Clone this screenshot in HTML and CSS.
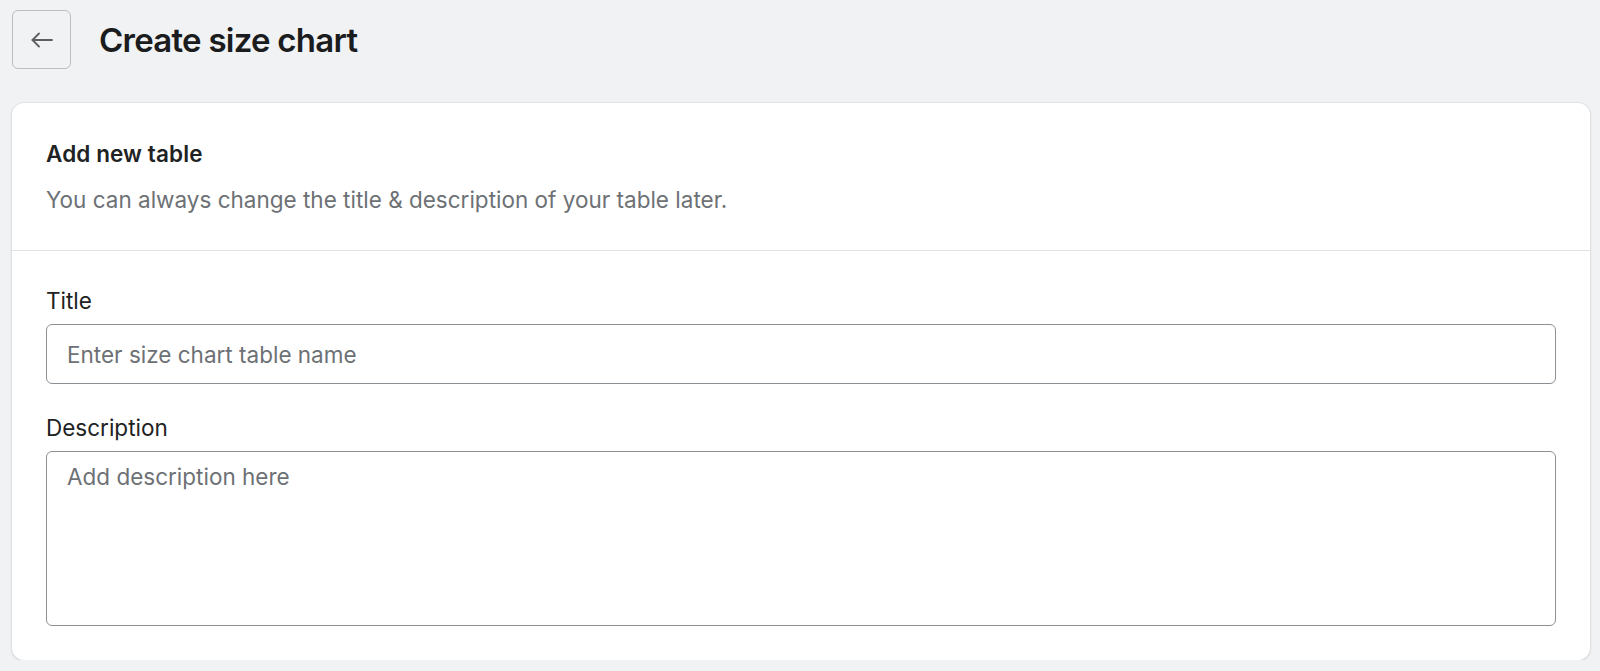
FILE: index.html
```html
<!DOCTYPE html>
<html lang="en">
<head>
<meta charset="utf-8">
<title>Create size chart</title>
<link rel="stylesheet" href="styles.css">
</head>
<body>
<div class="page">
  <header class="page-header">
    <button class="back-btn" type="button" aria-label="Back">
      <svg width="22" height="16" viewBox="0 0 22 16" fill="none" stroke="#5c5f62" stroke-width="1.8" stroke-linecap="round" stroke-linejoin="round">
        <path d="M21 8H1.5"/>
        <path d="M8 1.5L1.5 8L8 14.5"/>
      </svg>
    </button>
    <h1 class="page-title">Create size chart</h1>
  </header>

  <section class="card">
    <div class="card-section card-head">
      <h2 class="card-title">Add new table</h2>
      <p class="card-sub">You can always change the title &amp; description of your table later.</p>
    </div>
    <div class="card-section card-form">
      <label class="field">
        <span class="field-label">Title</span>
        <input class="text-input" type="text" placeholder="Enter size chart table name">
      </label>
      <label class="field">
        <span class="field-label">Description</span>
        <textarea class="text-area" placeholder="Add description here"></textarea>
      </label>
    </div>
  </section>
</div>
</body>
</html>
```

FILE: styles.css
```css
* { box-sizing: border-box; }

html, body {
  margin: 0;
  padding: 0;
  background: #f1f2f4;
  font-family: Inter, "Noto Sans", "Liberation Sans", sans-serif;
  color: #202223;
}

.page {
  padding: 10px 10px 0 12px;
}

.page-header {
  display: flex;
  align-items: center;
  gap: 28px;
  height: 59px;
}

.back-btn {
  width: 59px;
  height: 59px;
  flex: 0 0 59px;
  display: flex;
  align-items: center;
  justify-content: center;
  background: transparent;
  border: 1px solid #babfc3;
  border-radius: 6px;
  padding: 0;
  cursor: pointer;
}

.page-title {
  margin: 0;
  font-size: 33px;
  font-weight: 600;
  line-height: 40px;
  letter-spacing: -0.75px;
  color: #1a1c1d;
}

.card {
  margin-top: 34px;
  background: #ffffff;
  border-radius: 12px;
  box-shadow: 0 0 0 1px rgba(63, 63, 68, 0.05), 0 1px 3px rgba(63, 63, 68, 0.15);
  overflow: hidden;
}

.card-section {
  padding-left: 34px;
  padding-right: 34px;
}

.card-head {
  padding-top: 37px;
  padding-bottom: 36px;
  border-bottom: 1px solid #e1e3e5;
}

.card-title {
  margin: 0;
  font-size: 22.5px;
  font-weight: 600;
  line-height: 28px;
  letter-spacing: 0.1px;
}

.card-sub {
  margin: 18px 0 0;
  font-size: 22.5px;
  line-height: 28px;
  color: #6d7175;
}

.card-form {
  padding-top: 36px;
  padding-bottom: 34px;
  display: flex;
  flex-direction: column;
  gap: 30px;
}

.field {
  display: flex;
  flex-direction: column;
  gap: 9px;
}

.field-label {
  font-size: 22.5px;
  line-height: 28px;
  color: #202223;
}

.text-input,
.text-area {
  width: 100%;
  font-family: inherit;
  font-size: 22.5px;
  line-height: 28px;
  color: #202223;
  background: #ffffff;
  border: 1px solid #8c9196;
  border-radius: 6px;
  padding: 0 20px;
  outline: none;
}

.text-input {
  height: 60px;
}

.text-area {
  height: 175px;
  padding-top: 11px;
  resize: none;
  display: block;
}

.text-input::placeholder,
.text-area::placeholder {
  color: #6d7175;
  opacity: 1;
}
```
